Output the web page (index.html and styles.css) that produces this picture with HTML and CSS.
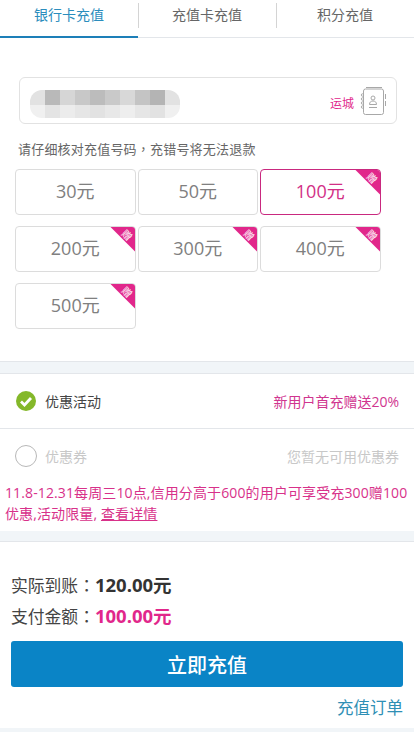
FILE: index.html
```html
<!DOCTYPE html>
<html lang="zh-CN">
<head>
  <meta charset="UTF-8">
  <meta name="viewport" content="width=device-width, initial-scale=1.0">
  <title>充值</title>
  <link rel="stylesheet" href="styles.css">
</head>
<body>
  <nav class="tabs">
    <a class="tab active">银行卡充值</a>
    <a class="tab">充值卡充值</a>
    <a class="tab">积分充值</a>
  </nav>

  <section class="recharge">
    <div class="phone-box">
      <svg class="phone-blur" width="150" height="28" viewBox="0 0 150 28">
        <rect width="150" height="15" fill="#e2e2e2"/>
        <rect y="15" width="150" height="13" fill="#f0f0f0"/>
        <rect x="15" width="15" height="15" fill="#b9b9b9"/>
        <rect x="30" width="15" height="15" fill="#d6d6d6"/>
        <rect x="45" width="15" height="15" fill="#c8c8c8"/>
        <rect x="60" width="15" height="15" fill="#bcbcbc"/>
        <rect x="75" width="15" height="15" fill="#c9c9c9"/>
        <rect x="90" width="15" height="15" fill="#d8d8d8"/>
        <rect x="105" width="15" height="15" fill="#c4c4c4"/>
        <rect x="120" width="15" height="15" fill="#b4b4b4"/>
        <rect x="15" y="15" width="15" height="13" fill="#e4e4e4"/>
        <rect x="30" y="15" width="15" height="13" fill="#ececec"/>
        <rect x="45" y="15" width="15" height="13" fill="#e6e6e6"/>
        <rect x="60" y="15" width="15" height="13" fill="#e2e2e2"/>
        <rect x="75" y="15" width="15" height="13" fill="#e8e8e8"/>
        <rect x="90" y="15" width="15" height="13" fill="#eeeeee"/>
        <rect x="105" y="15" width="15" height="13" fill="#e6e6e6"/>
        <rect x="120" y="15" width="15" height="13" fill="#e2e2e2"/>
      </svg>
      <span class="carrier">运城</span>
      <svg class="contacts" width="27" height="28" viewBox="0 0 27 28" fill="none" stroke="#a8a8a8">
        <path d="M3.500 4a2 2 0 0 1 2-2h16a2 2 0 0 1 2 2v21.500a2 2 0 0 1-2 2h-16a2 2 0 0 1-2-2z"/>
        <path d="M6 .500h16"/>
        <circle cx="2.500" cy="8" r="1.200"/>
        <circle cx="2.500" cy="12" r="1.200"/>
        <circle cx="2.500" cy="16" r="1.200"/>
        <circle cx="2.500" cy="20" r="1.200"/>
        <path d="M25.500 7v5M25.500 14v5"/>
        <circle cx="13" cy="11" r="2"/>
        <path d="M9.500 17.500c0-2.500 1.500-3.500 3.500-3.500s3.500 1 3.500 3.500zM9 20.500h8"/>
      </svg>
    </div>
    <p class="hint">请仔细核对充值号码<span class="punct" lang="zh-TW">，</span>充错号将无法退款</p>
    <div class="amounts">
      <div class="amount">30元</div>
      <div class="amount">50元</div>
      <div class="amount selected">100元<span class="gift"><i>赠</i></span></div>
      <div class="amount">200元<span class="gift"><i>赠</i></span></div>
      <div class="amount">300元<span class="gift"><i>赠</i></span></div>
      <div class="amount">400元<span class="gift"><i>赠</i></span></div>
      <div class="amount">500元<span class="gift"><i>赠</i></span></div>
    </div>
  </section>

  <div class="band"></div>

  <section class="offers">
    <div class="offer-row">
      <span class="offer-name">
        <svg class="check" width="22" height="22" viewBox="0 0 22 22">
          <circle cx="11" cy="11" r="10" fill="#84b82a"/>
          <path d="M6 11.500l3.500 3.500 6.500-7" fill="none" stroke="#fff" stroke-width="2.800"/>
        </svg>
        优惠活动
      </span>
      <span class="offer-note">新用户首充赠送20%</span>
    </div>
    <div class="offer-row disabled">
      <span class="offer-name">
        <span class="radio"></span>
        优惠券
      </span>
      <span class="offer-note">您暂无可用优惠券</span>
    </div>
    <p class="promo">11.8-12.31每周三10点,信用分高于600的用户可享受充300赠100优惠,活动限量, <a>查看详情</a></p>
  </section>

  <div class="band band-low"></div>

  <section class="pay">
    <p class="total">实际到账<span class="punct" lang="zh-TW">：</span><b>120.00元</b></p>
    <p class="total">支付金额<span class="punct" lang="zh-TW">：</span><b class="pink">100.00元</b></p>
    <button class="pay-btn">立即充值</button>
    <a class="orders">充值订单</a>
  </section>
  <div class="foot"></div>
</body>
</html>
```

FILE: styles.css
```css
:root {
  --blue: #0a84c6;
  --pink: #e1278b;
  --line: #e3e6ea;
  --band: #f1f5f8;
}

* {
  box-sizing: border-box;
}

body {
  margin: 0;
  background: #fff;
  color: #444;
  font-family: "Open Sans", "Noto Sans CJK SC", sans-serif;
  height: 732px;
  overflow: hidden;
}

p {
  margin: 0;
}

/* full-width punctuation sits centred in the cell */
.punct {
  font-family: "Noto Sans CJK TC", sans-serif;
}

/* Tabs */
.tabs {
  display: flex;
  height: 38px;
  border-bottom: 1px solid var(--line);
}

.tab {
  position: relative;
  flex: 1;
  height: 38px;
  padding-top: 3px;
  text-align: center;
  font-size: 14px;
  line-height: 24px;
  color: #666;
}

.tab.active {
  color: #2b8dbd;
  border-bottom: 2px solid #1d7fb8;
}

.tab + .tab::before {
  content: '';
  position: absolute;
  left: 0;
  top: 3px;
  height: 25px;
  border-left: 1px solid #d4d4d4;
}

/* Number and amounts */
.recharge {
  padding: 39px 0 0 15px;
  height: 323px;
}

.phone-box {
  display: flex;
  align-items: center;
  width: 378px;
  height: 47px;
  margin-left: 4px;
  padding: 0 9px 0 10px;
  border: 1px solid #e2e2e2;
  border-radius: 6px;
}

.phone-blur {
  flex: none;
  border-radius: 12px;
  margin-top: 7px;
}

.carrier {
  margin-left: auto;
  margin-right: 6px;
  margin-top: 5px;
  font-size: 12px;
  color: var(--pink);
}

.contacts {
  flex: none;
  margin-top: 1px;
}

.hint {
  margin: 15px 0 10px 3px;
  font-size: 13px;
  letter-spacing: .2px;
  line-height: 20px;
  color: #666;
}

.amounts {
  display: grid;
  grid-template-columns: 120.5px 119.5px 120.5px;
  column-gap: 2.5px;
  row-gap: 11px;
}

.amount {
  position: relative;
  height: 46px;
  border: 1px solid #dcdcdc;
  border-radius: 4px;
  text-align: center;
  font-size: 18px;
  line-height: 43px;
  color: #808080;
  overflow: hidden;
}

.amount.selected {
  border-color: #c9297f;
  color: #d22f86;
}

.gift {
  position: absolute;
  top: -1px;
  right: -1px;
  width: 26px;
  height: 26px;
  background: var(--pink);
  clip-path: polygon(0 0, 100% 0, 100% 100%);
}

.gift i {
  position: absolute;
  top: 3px;
  right: 4px;
  font-size: 10px;
  line-height: 12px;
  font-style: normal;
  color: #fff;
  transform: rotate(45deg);
}

/* Separators */
.band {
  height: 13px;
  background: var(--band);
  border-top: 1px solid var(--line);
  border-bottom: 1px solid var(--line);
}

.band-low {
  height: 11px;
  border-top: 0;
}

/* Offers */
.offer-row {
  display: flex;
  align-items: center;
  justify-content: space-between;
  height: 55px;
  padding: 0 15px;
  border-bottom: 1px solid var(--line);
  font-size: 14px;
}

.offer-row.disabled {
  height: 53px;
  border-bottom: 0;
  color: #c8c8c8;
}

.offer-name {
  display: flex;
  align-items: center;
  gap: 8px;
  font-size: 14px;
}

.check {
  display: block;
}

.radio {
  width: 22px;
  height: 22px;
  border: 1px solid #b8b8b8;
  border-radius: 50%;
}

.offer-note {
  color: #d0358f;
}

.disabled .offer-note {
  color: #c8c8c8;
}

.promo {
  padding: 0 0 0 5px;
  font-size: 14px;
  letter-spacing: .12px;
  line-height: 21px;
  color: #d8318a;
  height: 49px;
}

.promo a {
  text-decoration: underline;
}

/* Payment */
.pay {
  padding: 28px 11px 0;
  height: 186px;
}

.total {
  height: 31px;
  font-size: 16.800px;
  line-height: 31px;
  color: #444;
}

.total b {
  font-size: 18.500px;
  line-height: 1;
  color: #333;
}

.total b.pink {
  color: var(--pink);
}

.pay-btn {
  display: block;
  width: 392px;
  height: 46px;
  margin-top: 9px;
  border: none;
  border-radius: 3px;
  background: var(--blue);
  color: #fff;
  font-family: inherit;
  font-size: 20px;
  font-weight: 500;
}

.orders {
  display: block;
  margin-top: 8px;
  text-align: right;
  font-size: 16.500px;
  line-height: 26px;
  color: #2f8fb5;
}

.foot {
  height: 4px;
  background: var(--band);
}
```
